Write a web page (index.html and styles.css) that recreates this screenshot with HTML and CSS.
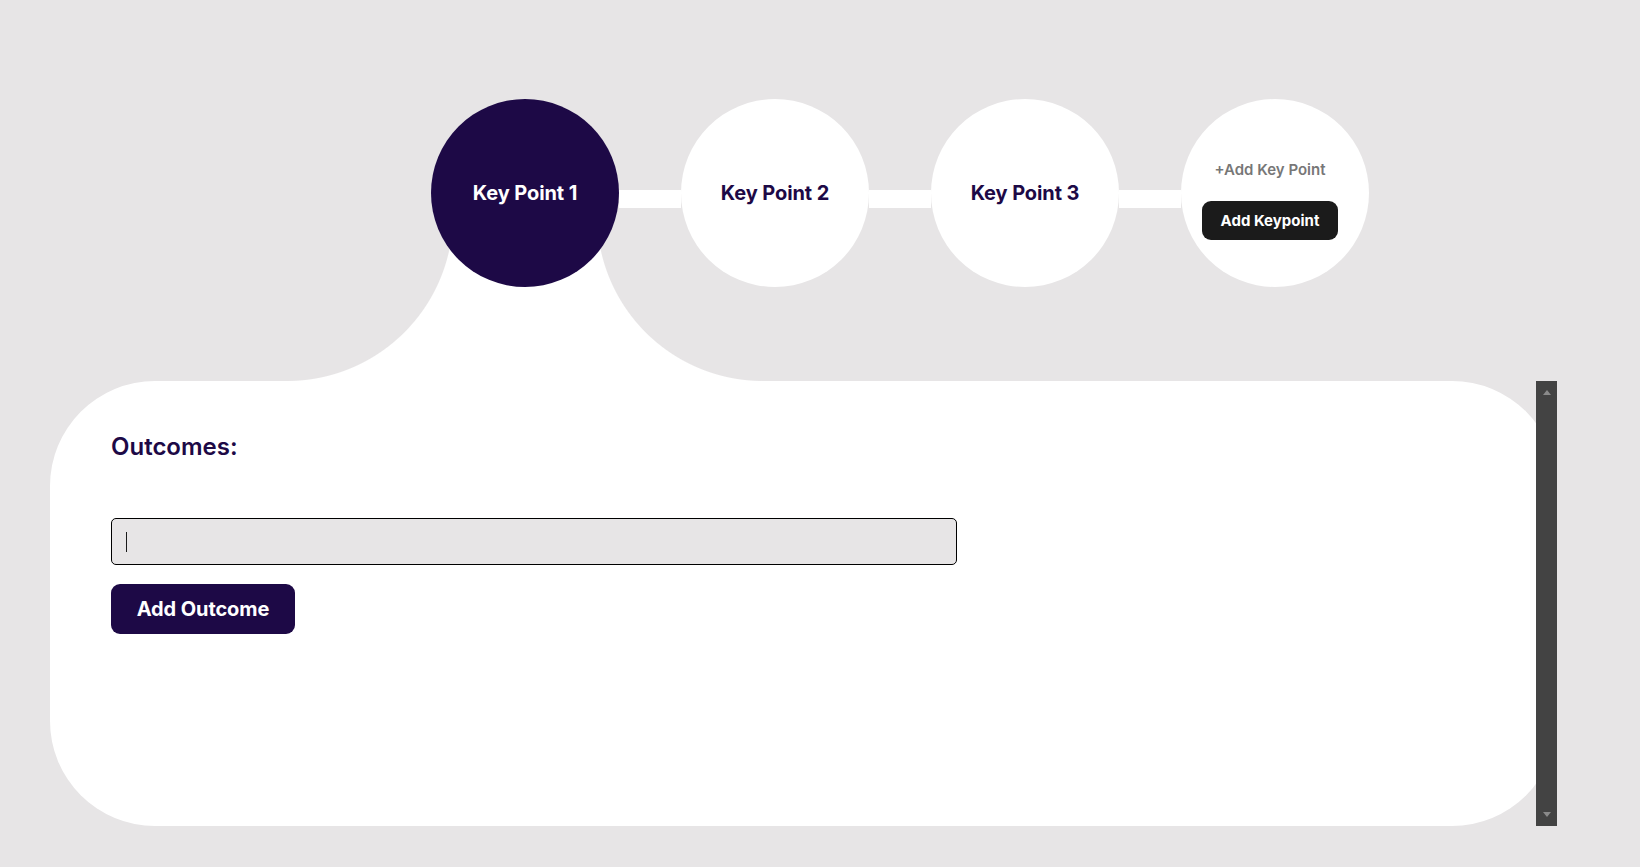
FILE: index.html
```html
<!DOCTYPE html>
<html lang="en">
<head>
<meta charset="utf-8">
<title>Key Points</title>
<link rel="stylesheet" href="styles.css">
</head>
<body>
  <div class="steps">
    <div class="kp kp-active"><span class="kp-title">Key Point 1</span></div>
    <div class="link"></div>
    <div class="kp"><span class="kp-title">Key Point 2</span></div>
    <div class="link"></div>
    <div class="kp"><span class="kp-title">Key Point 3</span></div>
    <div class="link"></div>
    <div class="kp kp-add">
      <span class="add-label">+Add Key Point</span>
      <button class="add-btn">Add Keypoint</button>
    </div>
  </div>

  <section class="panel">
    <h2 class="panel-title">Outcomes:</h2>
    <div class="field"><span class="caret"></span></div>
    <button class="outcome-btn">Add Outcome</button>
    <div class="scrollbar">
      <span class="arrow arrow-up"></span>
      <span class="arrow arrow-down"></span>
    </div>
  </section>
</body>
</html>
```

FILE: styles.css
```css
:root {
  --bg: #e7e5e6;
  --ink: #1d0946;
}

* { box-sizing: border-box; }

html, body {
  margin: 0;
  height: 100%;
}

body {
  background: var(--bg);
  font-family: Inter, "Noto Sans", "Liberation Sans", sans-serif;
  overflow: hidden;
}

.steps {
  display: flex;
  align-items: center;
  margin: 99px 0 0 431px;
}

.kp {
  position: relative;
  width: 188px;
  height: 188px;
  border-radius: 50%;
  background: #ffffff;
  display: flex;
  align-items: center;
  justify-content: center;
  flex: none;
}

.kp-title {
  font-size: 20px;
  font-weight: 700;
  color: var(--ink);
  letter-spacing: -0.1px;
}

.kp-active {
  background: var(--ink);
}

.kp-active .kp-title {
  color: #ffffff;
}

/* white tab joining the active key point to the panel */
.kp-active::before {
  content: "";
  position: absolute;
  z-index: -1;
  top: 116px;
  left: 50%;
  width: 476px;
  height: 175px;
  transform: translateX(-50%);
  background:
    radial-gradient(circle 166px at 0 0, var(--bg) 165.5px, transparent 166.5px),
    radial-gradient(circle 166px at 100% 0, var(--bg) 165.5px, transparent 166.5px),
    #ffffff;
}

.link {
  width: 62px;
  height: 18px;
  margin-top: 12px;
  background: #ffffff;
  flex: none;
}

.kp-add {
  flex-direction: column;
  gap: 22px;
  padding: 15px 10px 0 0;
}

.add-label {
  font-size: 15px;
  font-weight: 600;
  color: #777777;
  line-height: 18px;
}

.add-btn {
  width: 136px;
  height: 39px;
  border: none;
  border-radius: 9px;
  background: #1b1b1b;
  color: #ffffff;
  font-family: inherit;
  font-size: 15px;
  font-weight: 700;
  padding: 0;
}

.panel {
  position: relative;
  margin: 94px 0 0 50px;
  width: 1507px;
  height: 445px;
  background: #ffffff;
  border-radius: 105px;
  padding: 51px 0 0 61px;
}

.panel-title {
  margin: 0 0 57px;
  font-size: 24px;
  font-weight: 600;
  line-height: 29px;
  color: var(--ink);
}

.field {
  width: 846px;
  height: 47px;
  border: 1.5px solid #000000;
  border-radius: 5px;
  background: var(--bg);
  display: flex;
  align-items: center;
  padding-left: 14px;
}

.caret {
  width: 1px;
  height: 20px;
  background: #1a1a1a;
}

.outcome-btn {
  margin-top: 19px;
  width: 184px;
  height: 50px;
  border: none;
  border-radius: 9px;
  background: var(--ink);
  color: #ffffff;
  font-family: inherit;
  font-size: 20px;
  font-weight: 700;
  letter-spacing: -0.1px;
  padding: 0;
}

.scrollbar {
  position: absolute;
  top: 0;
  right: 0;
  bottom: 0;
  width: 21px;
  background: #434343;
  display: flex;
  flex-direction: column;
  justify-content: space-between;
  align-items: center;
  padding: 9px 0 9px;
}

.arrow {
  width: 0;
  height: 0;
  border-left: 4.5px solid transparent;
  border-right: 4.5px solid transparent;
}

.arrow-up {
  border-bottom: 5px solid #8a8a8a;
}

.arrow-down {
  border-top: 5px solid #8a8a8a;
}
```
